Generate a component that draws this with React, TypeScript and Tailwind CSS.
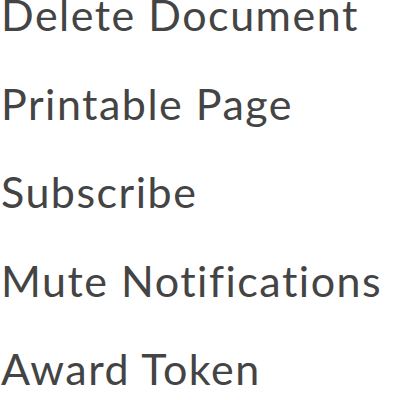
const items = ["Delete Document", "Printable Page", "Subscribe", "Mute Notifications", "Award Token"];

export default function App() {
  return (
    <div className="w-[400px] h-[400px] overflow-hidden bg-white">
      <ul className="-mt-[29px] pl-[1px] font-['Lato',sans-serif] text-[43px] leading-[88.5px] tracking-[1.5px] text-[#444444] [font-variant-ligatures:none]">
        {items.map((item) => (
          <li key={item} className="whitespace-nowrap">
            {item}
          </li>
        ))}
      </ul>
    </div>
  );
}
